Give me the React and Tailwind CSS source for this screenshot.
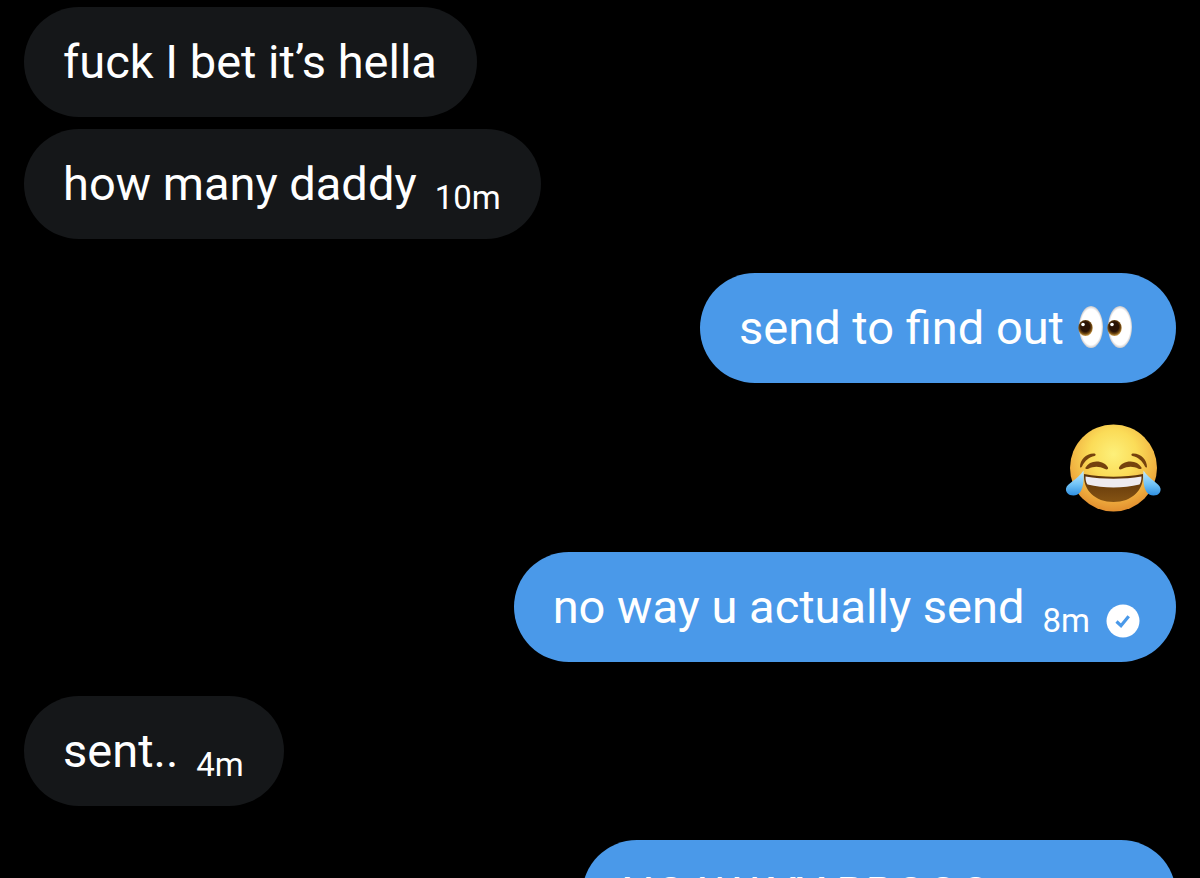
import React from 'react';
import clsx from 'clsx';

const Eyes = () => (
  <svg viewBox="0 0 60 44" role="img" aria-label="eyes" className="w-15 h-11 shrink-0">
    <defs>
      <radialGradient id="eyeWhite" cx="0.5" cy="0.5" r="0.5">
        <stop offset="0.85" stopColor="#ffffff" />
        <stop offset="1" stopColor="#c9c7c9" />
      </radialGradient>
      <radialGradient id="iris" cx="0.48" cy="0.42" r="0.56">
        <stop offset="0.55" stopColor="#2a1305" />
        <stop offset="0.78" stopColor="#6a430f" />
        <stop offset="1" stopColor="#c29343" />
      </radialGradient>
    </defs>
    {[0, 29].map((x) => (
      <g key={x} transform={`translate(${x} 0)`}>
        <ellipse cx="15" cy="21" rx="12" ry="21" fill="url(#eyeWhite)" />
        <ellipse cx="9.5" cy="22" rx="7.2" ry="8" fill="url(#iris)" />
        <circle cx="7" cy="18.5" r="1.8" fill="#fff" />
      </g>
    ))}
  </svg>
);

const Joy = () => (
  <svg viewBox="0 0 96 88" role="img" aria-label="face with tears of joy" className="w-24 h-[88px]">
    <defs>
      <radialGradient id="face" cx="0.5" cy="0.34" r="0.68">
        <stop offset="0" stopColor="#fdf07a" />
        <stop offset="0.4" stopColor="#fbdc58" />
        <stop offset="0.75" stopColor="#f0b040" />
        <stop offset="1" stopColor="#e08a2c" />
      </radialGradient>
      <linearGradient id="mouth" x1="0" y1="0" x2="0" y2="1">
        <stop offset="0" stopColor="#5b3209" />
        <stop offset="1" stopColor="#855313" />
      </linearGradient>
      <linearGradient id="tear" x1="0" y1="0" x2="0" y2="1">
        <stop offset="0" stopColor="#c5ecff" />
        <stop offset="0.55" stopColor="#72c4f7" />
        <stop offset="1" stopColor="#2f8fe0" />
      </linearGradient>
    </defs>
    <circle cx="48.5" cy="44" r="43.5" fill="url(#face)" />
    <g fill="#75420d">
      <path d="M15 43C15 36 21 29 29.500 29.500C31 29.800 31 31.500 29.500 32C24 33 20 36.500 17 42.500C16.500 43.500 15.300 44 15 43Z" />
      <path d="M82 43C82 36 76 29 67.500 29.500C66 29.800 66 31.500 67.500 32C73 33 77 36.500 80 42.500C80.500 43.500 81.700 44 82 43Z" />
      <path d="M20.500 43.500C23 39.500 26.500 37.500 31.500 37.500C37 37.500 41 40 43 43.500C43.500 45.500 41.500 46 40 45C34 42 29 42 23.500 44.700C21.500 45.500 20 45 20.500 43.500Z" />
      <path d="M76.500 43.500C74 39.500 70.500 37.500 65.500 37.500C60 37.500 56 40 54 43.500C53.500 45.500 55.500 46 57 45C63 42 68 42 73.500 44.700C75.500 45.500 77 45 76.500 43.500Z" />
    </g>
    <path d="M19 50C38 53.500 59 53.500 78 50C79 66 67 78 48.500 78C30 78 18 66 19 50Z" fill="url(#mouth)" />
    <path d="M20.500 52.500C38 55.500 59 55.500 76.500 52.500C76.500 56 76 58.500 74.500 60.500C58 64.500 39 64.500 22.500 60.500C21 58.500 20.500 56 20.500 52.500Z" fill="#eeebf0" />
    <path d="M18.500 46.500C19 54 19.500 71.500 8.500 71.500C3 71.500 0.500 68 1 64.500C2 59 12.500 56 18.500 46.500Z" fill="url(#tear)" />
    <path d="M78.500 46.500C78 54 77.500 71.500 88.500 71.500C94 71.500 96 68 95.500 64.500C94.500 59 84.500 56 78.500 46.500Z" fill="url(#tear)" />
  </svg>
);

const SentBadge = () => (
  <svg viewBox="0 0 34 34" role="img" aria-label="Sent" className="w-[34px] h-[34px] shrink-0">
    <circle cx="17" cy="17" r="16.5" fill="#fff" />
    <path d="M10.500 17.500L15 21.700L22.700 12.200" fill="none" stroke="#4a99e9" strokeWidth="3.200" />
  </svg>
);

const Bubble = ({ mine, time, sent, tall, children }) => (
  <div
    className={clsx(
      'flex pl-[39px] rounded-[55px] whitespace-nowrap',
      mine ? 'self-end bg-[#4a99e9]' : 'self-start bg-[#151719]',
      sent ? 'pr-9' : 'pr-10',
      tall ? 'flex-col w-1/2 min-w-[594px] py-[26px]' : 'items-center gap-[18px] min-h-[110px] py-6'
    )}
  >
    <p className="flex items-center gap-3 text-[47px] leading-[56px]">{children}</p>
    {time && (
      <div className={clsx('flex items-center gap-4 text-[33px] leading-[34px]', tall ? 'self-end' : 'pt-7')}>
        <time>{time}</time>
        {sent && <SentBadge />}
      </div>
    )}
  </div>
);

const App = () => {
  return (
    <main className="h-screen overflow-hidden bg-black px-6 pt-[7px] text-white font-['Roboto',sans-serif]">
      <div className="flex flex-col gap-[34px]">
        <div className="flex flex-col gap-3">
          <Bubble>fuck I bet it’s hella</Bubble>
          <Bubble time="10m">how many daddy</Bubble>
        </div>
        <div className="flex flex-col">
          <Bubble mine>
            send to find out <Eyes />
          </Bubble>
          <div className="self-end mt-[41px] mb-10 pr-[15px]">
            <Joy />
          </div>
          <Bubble mine time="8m" sent>
            no way u actually send
          </Bubble>
        </div>
        <Bubble time="4m">sent..</Bubble>
        <Bubble mine time="3m" sent tall>
          NO WAYY BROOO
        </Bubble>
      </div>
    </main>
  );
};

export default App;
